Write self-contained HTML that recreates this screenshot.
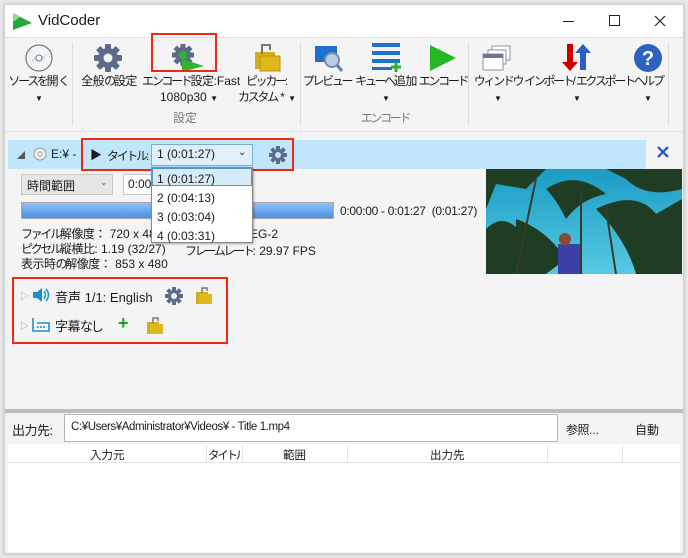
<!DOCTYPE html>
<html><head><meta charset="utf-8"><style>
*{margin:0;padding:0;box-sizing:border-box}
body{width:688px;height:558px;background:#e9e9e9;position:relative;overflow:hidden;font-family:"Liberation Sans","Noto Sans CJK JP",sans-serif;font-size:12px;color:#1a1a1a}
.a{position:absolute}
.win{left:4px;top:4px;width:680px;height:550px;background:#f4f4f4;border:1px solid #cfcfcf;box-shadow:0 0 4px rgba(0,0,0,.2)}
.lbl{position:absolute;text-align:center;font-size:12px;line-height:16px;white-space:nowrap}
i{font-style:normal;letter-spacing:-2.3px}
b{font-weight:normal;letter-spacing:-0.5px}
.red{position:absolute;border:2px solid #f4260f}
.dd{font-size:8px;letter-spacing:0}
</style></head><body>
<div class="a win"></div>
<div class="a" style="left:5px;top:5px;width:678px;height:32px;background:#fff"></div>
<svg class="a" style="left:10px;top:10px" width="24" height="22"><polygon points="3,3 22,13 3,20" fill="#27a839"/><polygon points="3,3 10,7 3,12" fill="#8fd79a"/></svg>
<div class="a" style="left:38px;top:12px;font-size:15px">VidCoder</div>
<div class="a" style="left:563px;top:21px;width:11px;height:1px;background:#222"></div>
<div class="a" style="left:609px;top:15px;width:11px;height:11px;border:1px solid #222"></div>
<svg class="a" style="left:654px;top:15px" width="12" height="12"><path d="M1 1 L11 11 M11 1 L1 11" stroke="#222" stroke-width="1.2"/></svg>
<div class="a" style="left:5px;top:37px;width:678px;height:1px;background:#e0e0e0"></div>
<div class="a" style="left:5px;top:38px;width:678px;height:93px;background:#f4f4f4"></div>
<div class="a" style="left:72px;top:42px;width:1px;height:84px;background:#ddd"></div>
<div class="a" style="left:300px;top:42px;width:1px;height:84px;background:#ddd"></div>
<div class="a" style="left:468px;top:42px;width:1px;height:84px;background:#ddd"></div>
<div class="a" style="left:668px;top:42px;width:1px;height:84px;background:#ddd"></div>
<div class="a" style="left:5px;top:131px;width:678px;height:1px;background:#e2e2e2"></div>
<svg class="a" style="left:24px;top:43px" width="30" height="30"><circle cx="15" cy="15" r="13" fill="#f3f3f3" stroke="#777" stroke-width="1.2"/><path d="M6 20 L13 16 L11 13Z M24 10 L17 14 L19 17Z" fill="#bfe3f5"/><circle cx="15" cy="15" r="3" fill="#fff" stroke="#777"/></svg>
<svg class="a" style="left:93px;top:43px" width="30" height="30"><g transform="translate(15,15)" fill="#5d6b8a"><circle r="10"/><rect x="-3" y="-14" width="6" height="28" rx="1"/><rect x="-3" y="-14" width="6" height="28" rx="1" transform="rotate(45)"/><rect x="-3" y="-14" width="6" height="28" rx="1" transform="rotate(90)"/><rect x="-3" y="-14" width="6" height="28" rx="1" transform="rotate(135)"/><circle r="4.5" fill="#f4f4f4"/></g></svg>
<svg class="a" style="left:170px;top:42px" width="36" height="30"><g transform="translate(13,13)" fill="#5d6b8a"><circle r="8"/><rect x="-2.5" y="-11" width="5" height="22"/><rect x="-2.5" y="-11" width="5" height="22" transform="rotate(45)"/><rect x="-2.5" y="-11" width="5" height="22" transform="rotate(90)"/><rect x="-2.5" y="-11" width="5" height="22" transform="rotate(135)"/><circle r="4" fill="#2db52d"/></g><polygon points="12,17 34,24 12,30" fill="#2db52d"/></svg>
<div class="red" style="left:151px;top:33px;width:66px;height:39px"></div>
<svg class="a" style="left:252px;top:42px" width="30" height="30"><rect x="3" y="10" width="20" height="17" fill="#d4ad1e"/><rect x="8" y="14" width="20" height="15" fill="#e1b81c" stroke="#b8930c"/><path d="M10 12 V3 H18 V8" stroke="#777" stroke-width="2" fill="none"/></svg>
<svg class="a" style="left:314px;top:43px" width="30" height="30"><rect x="1" y="3" width="22" height="16" fill="#1f6fd0"/><circle cx="18" cy="17" r="7" fill="#b7cde6" stroke="#7a8ba6" stroke-width="2"/><line x1="23" y1="22" x2="28" y2="28" stroke="#6a7ea0" stroke-width="3"/></svg>
<svg class="a" style="left:372px;top:42px" width="30" height="30"><rect x="0" y="1" width="28" height="4" fill="#1f6fd0"/><rect x="0" y="9" width="28" height="4" fill="#1f6fd0"/><rect x="0" y="17" width="28" height="4" fill="#1f6fd0"/><rect x="0" y="25" width="20" height="3" fill="#1f6fd0"/><path d="M24 20 V30 M19 25 H29" stroke="#2db52d" stroke-width="3"/></svg>
<svg class="a" style="left:428px;top:43px" width="30" height="30"><polygon points="2,2 28,15 2,28" fill="#25b825"/></svg>
<svg class="a" style="left:482px;top:44px" width="30" height="28"><rect x="10" y="2" width="18" height="14" fill="#fff" stroke="#8a93a8"/><rect x="6" y="6" width="18" height="14" fill="#fff" stroke="#8a93a8"/><rect x="1" y="10" width="20" height="16" fill="#fff" stroke="#8a93a8"/><rect x="1" y="10" width="20" height="4" fill="#6c7690"/></svg>
<svg class="a" style="left:561px;top:42px" width="30" height="30"><path d="M6 2 H12 V20 H17 L9 29 L1 20 H6Z" fill="#c00"/><path d="M19 28 H25 V11 H30 L22 2 L14 11 H19Z" fill="#2a60c4"/></svg>
<svg class="a" style="left:633px;top:43px" width="30" height="30"><circle cx="15" cy="15" r="14" fill="#2e62c0"/><text x="15" y="22" text-anchor="middle" fill="#fff" font-size="20" font-weight="bold" font-family="Liberation Sans">?</text></svg>
<div class="lbl" style="left:8px;top:73px;width:62px"><i>ソースを</i><b>開く</b><br><span class="dd">▼</span></div>
<div class="lbl" style="left:78px;top:73px;width:62px"><b>全般</b><i>の</i><b>設定</b></div>
<div class="lbl" style="left:142px;top:73px;width:94px"><i>エンコード</i><b>設定</b>:Fast<br>1080p30 <span class="dd">▼</span></div>
<div class="lbl" style="left:238px;top:73px;width:58px"><i>ピッカー</i>:<br><i>カスタム</i> * <span class="dd">▼</span></div>
<div class="lbl" style="left:165px;top:110px;width:40px;color:#777">設定</div>
<div class="lbl" style="left:302px;top:73px;width:50px"><i>プレビュー</i></div>
<div class="lbl" style="left:354px;top:73px;width:64px"><i>キューへ</i><b>追加</b><br><span class="dd">▼</span></div>
<div class="lbl" style="left:418px;top:73px;width:50px"><i>エンコード</i></div>
<div class="lbl" style="left:360px;top:110px;width:50px;color:#777"><i>エンコード</i></div>
<div class="lbl" style="left:473px;top:73px;width:50px"><i>ウィンドウ</i><br><span class="dd">▼</span></div>
<div class="lbl" style="left:524px;top:73px;width:106px"><i>インポート</i>/<i>エクスポート</i><br><span class="dd">▼</span></div>
<div class="lbl" style="left:630px;top:73px;width:36px"><i>ヘルプ</i><br><span class="dd">▼</span></div>
<div class="a" style="left:8px;top:140px;width:638px;height:29px;background:#bfe6fa"></div>
<div class="a" style="left:17px;top:150px;font-size:8px;color:#555">◢</div>
<svg class="a" style="left:33px;top:147px" width="14" height="14"><circle cx="7" cy="7" r="6" fill="#eee" stroke="#999"/><circle cx="7" cy="7" r="2" fill="#fff" stroke="#999"/></svg>
<div class="a" style="left:51px;top:147px">E:¥ -</div>
<div class="a" style="left:90px;top:146px;font-size:12px">▶</div>
<div class="a" style="left:107px;top:147px"><i>タイトル</i>:</div>
<div class="a" style="left:151px;top:144px;width:102px;height:22px;border:1px solid #7fa9d6;background:#dff0fb"></div>
<div class="a" style="left:157px;top:147px">1 (0:01:27)</div>
<div class="a" style="left:238px;top:147px;font-size:10px">⌄</div>
<svg class="a" style="left:268px;top:145px" width="20" height="20"><g transform="translate(10,10)" fill="#5d6b8a"><circle r="6"/><rect x="-2" y="-9" width="4" height="18"/><rect x="-2" y="-9" width="4" height="18" transform="rotate(45)"/><rect x="-2" y="-9" width="4" height="18" transform="rotate(90)"/><rect x="-2" y="-9" width="4" height="18" transform="rotate(135)"/><circle r="3" fill="#bfe6fa"/></g></svg>
<div class="red" style="left:81px;top:138px;width:213px;height:33px"></div>
<svg class="a" style="left:657px;top:146px" width="12" height="12"><path d="M1 1 L11 11 M11 1 L1 11" stroke="#2a60c4" stroke-width="2.4"/></svg>
<div class="a" style="left:21px;top:174px;width:92px;height:21px;background:#e6e6e6;border:1px solid #c8c8c8"></div>
<div class="a" style="left:27px;top:177px">時間範囲</div>
<div class="a" style="left:100px;top:177px;font-size:9px;color:#555">⌄</div>
<div class="a" style="left:123px;top:174px;width:40px;height:21px;background:#fff;border:1px solid #c8c8c8"></div>
<div class="a" style="left:128px;top:177px">0:00:</div>
<div class="a" style="left:21px;top:202px;width:313px;height:17px;background:linear-gradient(#90c0f4,#4b8fe6);border:1px solid #a8a8a8"></div>
<div class="a" style="left:340px;top:204px;letter-spacing:-0.3px">0:00:00 - 0:01:27 &nbsp;(0:01:27)</div>
<div class="a" style="left:21px;top:227px;line-height:15px;white-space:nowrap"><i>ファイル</i><b>解像度</b>： 720 x 480<br><i>ピクセル</i><b>縦横比</b>: 1.19 (32/27)<br><b>表示時</b><i>の</i><b>解像度</b>： 853 x 480</div>
<div class="a" style="left:250px;top:227px">EG-2</div>
<div class="a" style="left:185px;top:242px;white-space:nowrap"><i>フレームレート</i>: 29.97 FPS</div>
<div class="a" style="left:151px;top:167px;width:102px;height:76px;background:#fff;border:1px solid #888;box-shadow:1px 1px 2px rgba(0,0,0,.3)"></div>
<div class="a" style="left:152px;top:168px;width:100px;height:18px;background:#d8ebf8;border:1px solid #4a98d8"></div>
<div class="a" style="left:157px;top:170px;line-height:19px">1 (0:01:27)<br>2 (0:04:13)<br>3 (0:03:04)<br>4 (0:03:31)</div>
<svg class="a" style="left:486px;top:169px" width="196" height="105"><defs><linearGradient id="s" x1="0" y1="0" x2="0" y2="1"><stop offset="0" stop-color="#1a9cc4"/><stop offset="1" stop-color="#57c9e3"/></linearGradient></defs><rect width="196" height="105" fill="url(#s)"/>
<g fill="#1f3d22"><path d="M0 0 H60 L40 20 L10 15 L0 40Z"/><path d="M0 60 Q20 40 40 70 L30 105 H0Z"/><path d="M60 20 Q90 0 120 25 Q95 30 80 50 Q70 30 60 20Z"/><path d="M110 40 Q150 20 170 45 L196 30 V105 H150 Q140 70 110 40Z"/><path d="M30 50 Q60 60 80 90 L60 105 H30Z"/><path d="M120 0 H196 V20 Q160 30 140 10Z"/></g>
<g stroke="#3a3a2a" stroke-width="2"><line x1="30" y1="105" x2="50" y2="10"/><line x1="95" y1="105" x2="95" y2="20"/><line x1="130" y1="105" x2="120" y2="40"/></g>
<rect x="72" y="75" width="22" height="30" fill="#3b3fa8"/><circle cx="79" cy="70" r="6" fill="#8a4a30"/></svg>
<div class="a" style="left:20px;top:289px;font-size:9px;color:#999">▷</div>
<svg class="a" style="left:32px;top:287px" width="18" height="16"><path d="M1 5 H5 L10 1 V15 L5 11 H1Z" fill="#1a8fd0"/><path d="M12 4 Q15 8 12 12 M14 2 Q19 8 14 14" stroke="#1a8fd0" stroke-width="1.5" fill="none"/></svg>
<div class="a" style="left:55px;top:287px;font-size:13px">音声 1/1: English</div>
<svg class="a" style="left:164px;top:286px" width="20" height="20"><g transform="translate(10,10)" fill="#5d6b8a"><circle r="6"/><rect x="-2" y="-9" width="4" height="18"/><rect x="-2" y="-9" width="4" height="18" transform="rotate(45)"/><rect x="-2" y="-9" width="4" height="18" transform="rotate(90)"/><rect x="-2" y="-9" width="4" height="18" transform="rotate(135)"/><circle r="3" fill="#f4f4f4"/></g></svg>
<svg class="a" style="left:195px;top:285px" width="18" height="20"><rect x="1" y="7" width="12" height="12" fill="#d4ad1e"/><rect x="4" y="9" width="13" height="10" fill="#e1b81c"/><path d="M7 8 V3 H12 V6" stroke="#777" stroke-width="1.5" fill="none"/></svg>
<div class="a" style="left:20px;top:319px;font-size:9px;color:#999">▷</div>
<svg class="a" style="left:32px;top:317px" width="18" height="16"><path d="M1 1 V14 H17 V6 H5" stroke="#1a8fd0" stroke-width="1.6" fill="none"/><path d="M5 10 H14" stroke="#1a8fd0" stroke-dasharray="2 1" stroke-width="1.5"/></svg>
<div class="a" style="left:55px;top:316px;font-size:13px"><b>字幕</b><i>なし</i></div>
<div class="a" style="left:118px;top:313px;color:#1aa01a;font-size:18px;font-weight:bold">+</div>
<svg class="a" style="left:146px;top:315px" width="18" height="20"><rect x="1" y="7" width="12" height="12" fill="#d4ad1e"/><rect x="4" y="9" width="13" height="10" fill="#e1b81c"/><path d="M7 8 V3 H12 V6" stroke="#777" stroke-width="1.5" fill="none"/></svg>
<div class="red" style="left:12px;top:277px;width:216px;height:67px"></div>
<div class="a" style="left:5px;top:409px;width:678px;height:4px;background:#bdbdbd"></div>
<div class="a" style="left:12px;top:420px;font-size:13px"><b>出力先</b>:</div>
<div class="a" style="left:64px;top:414px;width:494px;height:28px;background:#fff;border:1px solid #b5b5b5"></div>
<div class="a" style="left:71px;top:421px;font-size:11.5px;letter-spacing:-0.4px">C:¥Users¥Administrator¥Videos¥ - Title 1.mp4</div>
<div class="a" style="left:566px;top:421px"><b>参照</b>...</div>
<div class="a" style="left:635px;top:421px">自動</div>
<div class="a" style="left:8px;top:444px;width:672px;height:108px;background:#fff"></div>
<div class="a" style="left:8px;top:462px;width:672px;height:1px;background:#e3e3e3"></div>
<div class="a" style="left:206px;top:446px;width:1px;height:16px;background:#e3e3e3"></div>
<div class="a" style="left:242px;top:446px;width:1px;height:16px;background:#e3e3e3"></div>
<div class="a" style="left:347px;top:446px;width:1px;height:16px;background:#e3e3e3"></div>
<div class="a" style="left:547px;top:446px;width:1px;height:16px;background:#e3e3e3"></div>
<div class="a" style="left:622px;top:446px;width:1px;height:16px;background:#e3e3e3"></div>
<div class="a" style="left:90px;top:447px;font-size:11.5px">入力元</div>
<div class="a" style="left:208px;top:447px;font-size:11.5px;width:33px;overflow:hidden;white-space:nowrap"><i>タイトル</i></div>
<div class="a" style="left:283px;top:447px;font-size:11.5px">範囲</div>
<div class="a" style="left:430px;top:447px;font-size:11.5px">出力先</div>
</body></html>
